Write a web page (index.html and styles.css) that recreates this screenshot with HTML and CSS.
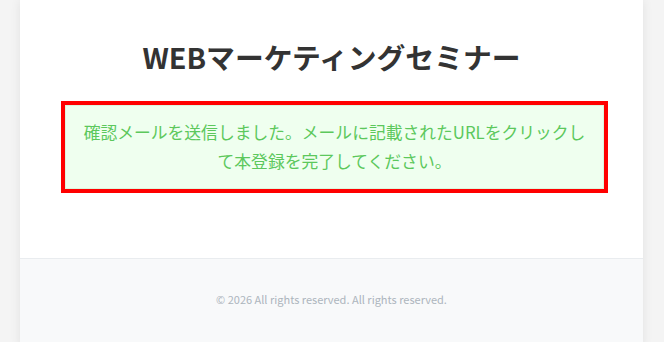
FILE: index.html
```html
<!DOCTYPE html>
<html lang="ja">

<head>
  <meta charset="UTF-8">
  <meta name="viewport" content="width=device-width, initial-scale=1.0">
  <title>WEBマーケティングセミナー</title>
  <link rel="stylesheet" href="styles.css">
</head>

<body>
  <div class="card">
    <div class="card-body">
      <h1 class="title">WEBマーケティングセミナー</h1>
      <div class="alert">
        確認メールを送信しました。メールに記載されたURLをクリックして本登録を完了してください。
      </div>
    </div>
    <div class="card-footer">
      <p>© 2026 All rights reserved. All rights reserved.</p>
    </div>
  </div>
</body>

</html>
```

FILE: styles.css
```css
* {
  margin: 0;
  padding: 0;
  box-sizing: border-box;
}

body {
  background: #f4f4f4;
  padding: 0 21px 0 20px;
  font-family: "Noto Sans CJK JP", "Noto Sans", sans-serif;
  color: #333;
}

.card {
  background: #fff;
  box-shadow: 0 0 10px rgba(0, 0, 0, 0.08);
  min-height: 342px;
}

.card-body {
  padding: 37px 39px 69px 45px;
}

.title {
  font-size: 28.8px;
  font-weight: bold;
  line-height: 40px;
  text-align: center;
  margin-bottom: 28px;
  margin-left: -6px;
}

.alert {
  background: #efffef;
  border: 1px solid #dcf5dc;
  outline: 4px solid #ff0000;
  color: #5cc85c;
  font-size: 16.8px;
  line-height: 29px;
  text-align: center;
  padding: 12px 14px;
}

.card-footer {
  background: #f8f9fa;
  border-top: 1px solid #e9ecef;
  padding: 31px 20px 40px;
  text-align: center;
}

.card-footer p {
  font-size: 11px;
  color: #adb5bd;
  line-height: 18px;
}
```
